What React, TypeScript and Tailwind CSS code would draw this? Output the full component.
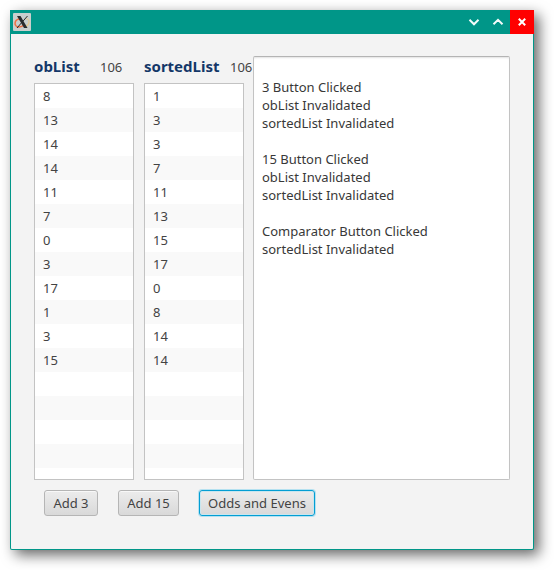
const obList = [8, 13, 14, 14, 11, 7, 0, 3, 17, 1, 3, 15];
const sortedList = [1, 3, 3, 7, 11, 13, 15, 17, 0, 8, 14, 14];

const log = `
3 Button Clicked
obList Invalidated
sortedList Invalidated

15 Button Clicked
obList Invalidated
sortedList Invalidated

Comparator Button Clicked
sortedList Invalidated`;

function NumberList({ title, titleWidth, items }: { title: string; titleWidth: string; items: number[] }) {
  const rows = Array.from({ length: 17 }, (_, i) => items[i]);
  return (
    <div className="w-[100px] shrink-0">
      <div className="flex h-[27px] items-start whitespace-nowrap">
        <span className={`${titleWidth} shrink-0 text-[15px] leading-5 font-bold text-[#133768]`}>{title}</span>
        <span className="pt-px text-[13px] leading-5">106</span>
      </div>
      <div className="h-[397px] overflow-hidden border border-[#c3c3c3] bg-white">
        {rows.map((n, i) => (
          <div key={i} className="h-6 pl-2 leading-[25px] even:bg-[#f9f9f9]">
            {n}
          </div>
        ))}
      </div>
    </div>
  );
}

function Button({ label, className, focused = false }: { label: string; className: string; focused?: boolean }) {
  return (
    <button
      className={`${className} h-[26px] rounded-[3px] border bg-linear-to-b from-[#ececec] to-[#d9d9d9] text-center leading-6 whitespace-nowrap ${
        focused
          ? "border-[#039ed3] shadow-[0_0_0_1px_#b5e1f0,inset_0_0_0_1px_#c9e6ef]"
          : "border-[#b5b5b5] shadow-[inset_0_1px_0_#f8f8f8]"
      }`}
    >
      {label}
    </button>
  );
}

function XLogo() {
  return (
    <svg width="18" height="18" viewBox="0 0 18 18">
      <rect width="18" height="18" rx="1" fill="#c9cfcd" />
      <path d="M6.500 6C1 6.500 0.500 13.500 5.500 14C8.500 14.200 10 13 11.500 11.500" fill="none" stroke="#f07043" strokeWidth="1.500" />
      <path d="M12.500 5.500C17.500 6 17 11.500 12.500 13.500" fill="none" stroke="#e6c990" strokeWidth="1.200" />
      <path d="M4 3H7.500L14.500 15H11Z" fill="#292c2e" />
      <path d="M14.500 3L9.700 8.500M8.300 10L4 15" stroke="#292c2e" strokeWidth="1" />
    </svg>
  );
}

export default function App() {
  return (
    <div className="h-[570px] w-[554px] overflow-hidden bg-white p-[10px] font-['Noto_Sans',sans-serif] text-[13px] text-[#434343]">
      <div className="flex h-[540px] w-[524px] flex-col rounded-b-[2px] bg-[#009688] shadow-[5px_5px_14px_0_rgba(0,0,0,0.6)]">
        <div className="flex h-6 shrink-0 items-center">
          <div className="ml-[3px]">
            <XLogo />
          </div>
          <div className="ml-auto flex h-6 w-12">
            <svg width="48" height="24" viewBox="0 0 48 24" fill="none" stroke="#f3faf9" strokeWidth="2">
              <path d="M7.500 9.800L12 14.300L16.500 9.800M31.500 14.300L36 9.800L40.500 14.300" />
            </svg>
          </div>
          <div className="h-6 w-6 bg-[#ff0000]">
            <svg width="24" height="24" viewBox="0 0 24 24" stroke="#fff" strokeWidth="2">
              <path d="M8.800 8.800L15.200 15.200M15.200 8.800L8.800 15.200" />
            </svg>
          </div>
        </div>
        <div className="mx-px mb-px grow rounded-b-[1px] bg-[#f3f3f3] pt-[22px] pl-[23px]">
          <div className="flex">
            <div className="flex gap-[10px]">
              <NumberList title="obList" titleWidth="w-[66px]" items={obList} />
              <NumberList title="sortedList" titleWidth="w-[86px]" items={sortedList} />
            </div>
            <div className="relative ml-[9px] h-[424px] w-[257px] rounded-[2px] border border-[#c3c3c3] border-t-[#b4b4b4] bg-white pt-[3px] pl-2 leading-[18px] whitespace-pre text-[#383838] shadow-[inset_0_2px_2px_-1px_#e2e2e2]">
              {log}
            </div>
          </div>
          <div className="mt-[10px] ml-[10px] flex">
            <Button label="Add 3" className="w-[54px]" />
            <Button label="Add 15" className="ml-5 w-[61px]" />
            <Button label="Odds and Evens" className="ml-5 w-[116px]" focused />
          </div>
        </div>
      </div>
    </div>
  );
}
